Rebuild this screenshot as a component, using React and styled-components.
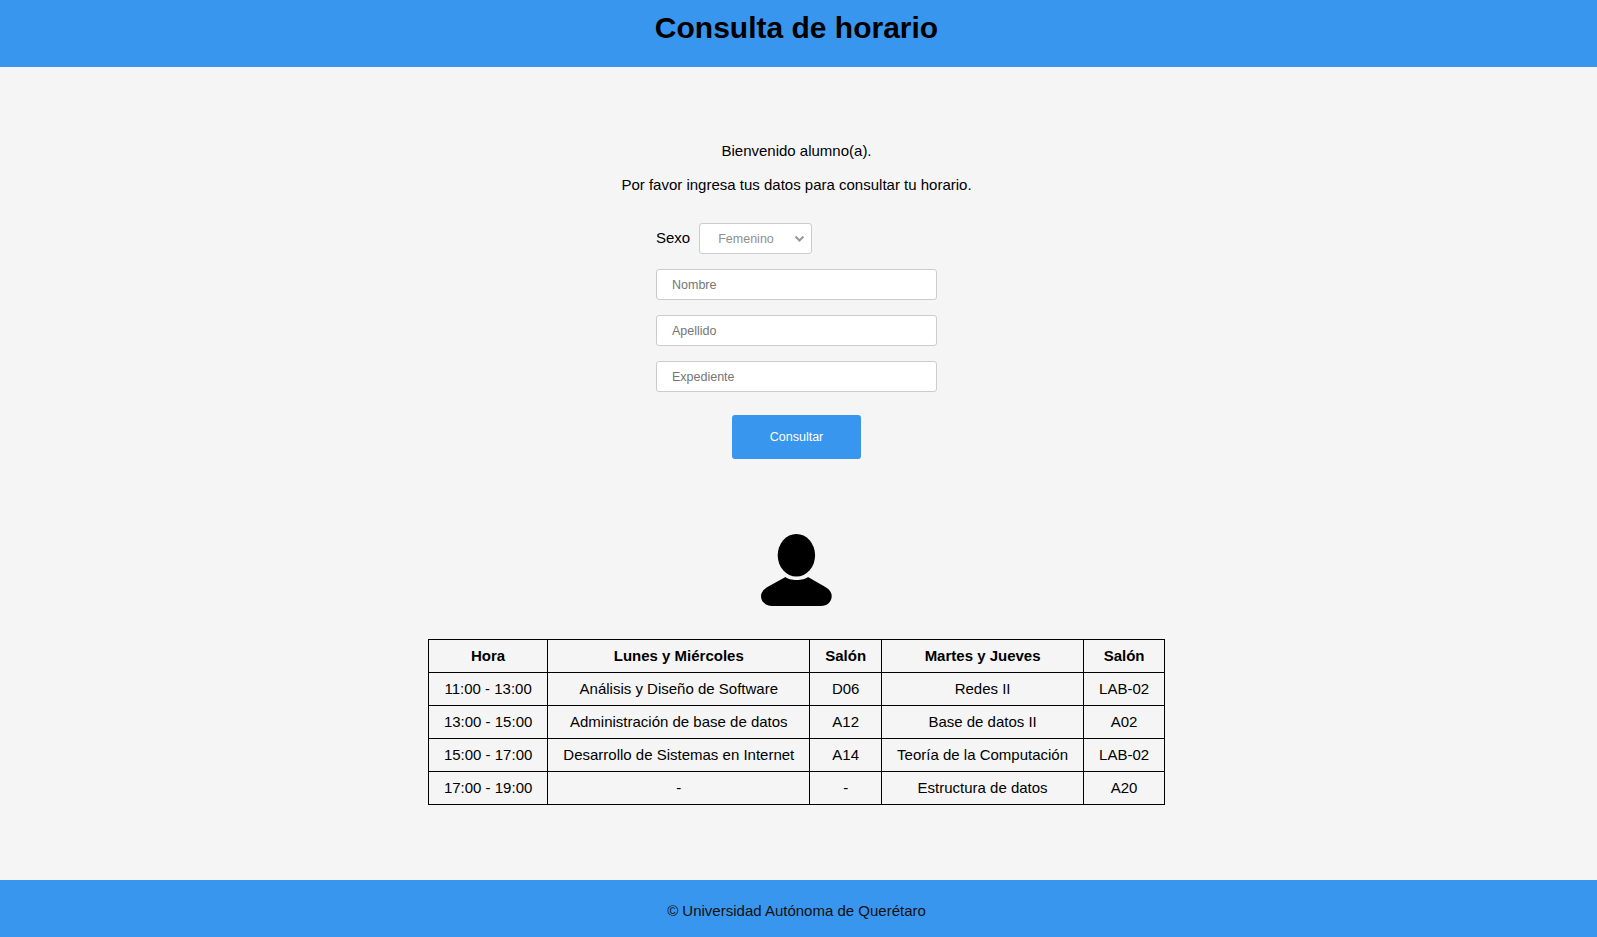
import React from "react";
import styled, { createGlobalStyle } from "styled-components";

const Global = createGlobalStyle`
  html, body { margin: 0; padding: 0; background: #f5f5f5; }
  body { font-family: "Liberation Sans", Arial, sans-serif; color: #000; }
`;
const Page = styled.div`
  display: flex; flex-direction: column; min-height: 937px;
`;
const Header = styled.header`
  background: #3996ee; height: 67px; box-sizing: border-box; text-align: center; padding-right: 4px;
`;
const Title = styled.h1`
  margin: 0; font-size: 30px; line-height: 55px; font-weight: 700;
`;
const Main = styled.main`
  flex: 1; display: flex; flex-direction: column; align-items: center; padding: 75px 4px 0 0;
`;
const Intro = styled.p`
  margin: 0 0 17px; font-size: 15px; line-height: 17px; text-align: center;
`;
const Form = styled.form`
  width: 281px; display: flex; flex-direction: column; margin-top: 13px;
`;
const SexRow = styled.div`
  display: flex; align-items: center; gap: 9px; font-size: 15px; margin-bottom: 15px;
`;
const SexLabel = styled.span`
  padding-bottom: 2px;
`;
const Select = styled.div`
  position: relative; width: 113px; height: 31px; box-sizing: border-box;
  background: #fff; border: 1px solid #ccc; border-radius: 3px;
  display: flex; align-items: center; padding-left: 18px;
  font-size: 12.5px; color: #8f8f8f;
`;
const Chevron = styled.svg`
  position: absolute; right: 6px; top: 11px; width: 11px; height: 8px;
`;
const Input = styled.input`
  width: 100%; height: 31px; box-sizing: border-box; margin: 0 0 15px;
  background: #fff; border: 1px solid #ccc; border-radius: 3px; padding: 0 15px;
  font: 12.5px "Liberation Sans", Arial, sans-serif; outline: none;
  &::placeholder { color: #757575; opacity: 1; }
`;
const Button = styled.button`
  align-self: center; width: 129px; height: 44px; margin-top: 8px;
  background: #3996ee; color: #fff; border: 0; border-radius: 3px;
  font: 12.5px "Liberation Sans", Arial, sans-serif;
`;
const Avatar = styled.svg`
  display: block; width: 71px; height: 72px; margin: 75px 0 33px;
`;
const Table = styled.table`
  border-collapse: collapse; font-size: 15px; text-align: center;
`;
const Th = styled.th`
  border: 1px solid #000; height: 33px; padding: 0 15px 2px; box-sizing: border-box; font-weight: 700;
`;
const Td = styled.td`
  border: 1px solid #000; height: 33px; padding: 0 15px 2px; box-sizing: border-box;
`;
const Footer = styled.footer`
  background: #3996ee; height: 57px; display: flex; align-items: center; justify-content: center;
  font-size: 15px; padding: 3px 4px 0 0; box-sizing: border-box; color: #111;
`;

const head = ["Hora", "Lunes y Miércoles", "Salón", "Martes y Jueves", "Salón"];
const rows = [
  ["11:00 - 13:00", "Análisis y Diseño de Software", "D06", "Redes II", "LAB-02"],
  ["13:00 - 15:00", "Administración de base de datos", "A12", "Base de datos II", "A02"],
  ["15:00 - 17:00", "Desarrollo de Sistemas en Internet", "A14", "Teoría de la Computación", "LAB-02"],
  ["17:00 - 19:00", "-", "-", "Estructura de datos", "A20"],
];

export default function App() {
  return (
    <Page>
      <Global />
      <Header><Title>Consulta de horario</Title></Header>
      <Main>
        <Intro>Bienvenido alumno(a).</Intro>
        <Intro>Por favor ingresa tus datos para consultar tu horario.</Intro>
        <Form>
          <SexRow>
            <SexLabel>Sexo</SexLabel>
            <Select>
              Femenino
              <Chevron viewBox="0 0 11 8"><path d="M1.5 1.5 L5.5 5.5 L9.5 1.5" fill="none" stroke="#999" strokeWidth="2" /></Chevron>
            </Select>
          </SexRow>
          <Input placeholder="Nombre" />
          <Input placeholder="Apellido" />
          <Input placeholder="Expediente" />
          <Button type="button">Consultar</Button>
        </Form>
        <Avatar viewBox="0 0 71 72">
          <ellipse cx="35.4" cy="21.3" rx="18.7" ry="21.3" fill="#000" />
          <path d="M24.5 43 C28 47 43 47 47 43 L63.5 52.5 C68 55 70.7 58 70.7 62 C70.7 68 66 72 60 72 L10.7 72 C5 72 0 68 0 62 C0 58 3 55 7.3 52.5 Z" fill="#000" />
        </Avatar>
        <Table>
          <thead><tr>{head.map((h, i) => <Th key={i}>{h}</Th>)}</tr></thead>
          <tbody>
            {rows.map((r, i) => <tr key={i}>{r.map((c, j) => <Td key={j}>{c}</Td>)}</tr>)}
          </tbody>
        </Table>
      </Main>
      <Footer>© Universidad Autónoma de Querétaro</Footer>
    </Page>
  );
}
